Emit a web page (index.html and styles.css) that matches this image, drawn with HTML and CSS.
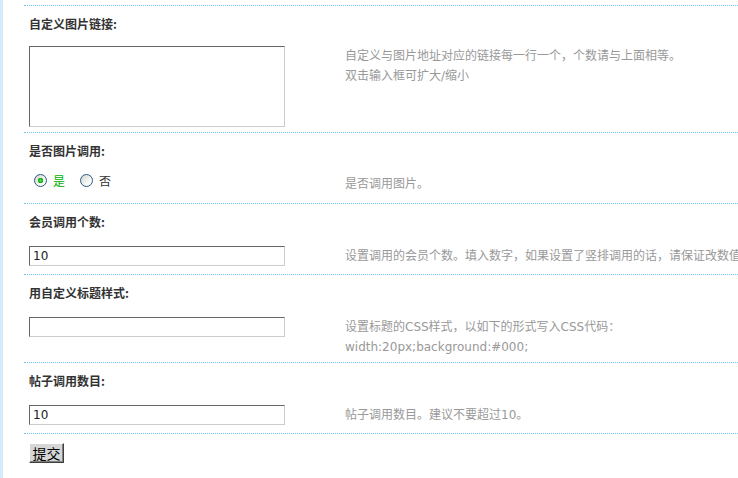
FILE: index.html
```html
<!DOCTYPE html>
<html lang="zh-CN">
<head>
<meta charset="utf-8">
<title>设置</title>
<link rel="stylesheet" href="styles.css">
</head>
<body>
<div class="page">
  <div class="block">
    <div class="title">自定义图片链接:</div>
    <div class="fields fields-area">
      <div class="field"><textarea class="textarea"></textarea></div>
      <div class="tip">自定义与图片地址对应的链接每一行一个，个数请与上面相等。<br>双击输入框可扩大/缩小</div>
    </div>
  </div>
  <div class="block">
    <div class="title">是否图片调用:</div>
    <div class="fields fields-radio">
      <div class="field radios">
        <input type="radio" class="radio" name="pic" checked><span class="label label-on">是</span>
        <input type="radio" class="radio" name="pic"><span class="label">否</span>
      </div>
      <div class="tip">是否调用图片。</div>
    </div>
  </div>
  <div class="block">
    <div class="title">会员调用个数:</div>
    <div class="fields">
      <div class="field"><input type="text" class="text" value="10"></div>
      <div class="tip">设置调用的会员个数。填入数字，如果设置了竖排调用的话，请保证改数值与竖排的列数相等。</div>
    </div>
  </div>
  <div class="block">
    <div class="title">用自定义标题样式:</div>
    <div class="fields">
      <div class="field"><input type="text" class="text" value=""></div>
      <div class="tip">设置标题的CSS样式，以如下的形式写入CSS代码：<br>width:20px;background:#000;</div>
    </div>
  </div>
  <div class="block">
    <div class="title">帖子调用数目:</div>
    <div class="fields">
      <div class="field"><input type="text" class="text" value="10"></div>
      <div class="tip">帖子调用数目。建议不要超过10。</div>
    </div>
  </div>
  <div class="block footer">
    <button type="button" class="btn">提交</button>
  </div>
</div>
</body>
</html>
```

FILE: styles.css
```css
html, body {
  margin: 0;
  padding: 0;
  background: #fff;
  overflow: hidden;
}
body {
  font-family: "DejaVu Sans", "Noto Sans CJK SC", sans-serif;
  font-size: 12px;
  color: #333;
}
.page {
  border-left: 3px solid #d3ecfa;
  padding: 5px 0 0 21px;
  min-height: 100vh;
  box-sizing: border-box;
  width: 1000px;
}
.block {
  border-top: 1px dotted #6cc4f0;
}
.title {
  padding: 8px 5px 6px;
  line-height: 20px;
  font-weight: bold;
  color: #333;
  font-family: "Noto Sans CJK SC", sans-serif;
}
.fields {
  display: grid;
  grid-template-columns: 316px 1fr;
  padding: 8px 0 5px;
}
.fields-area {
  padding-top: 6px;
}
.fields-radio {
  padding-top: 7px;
}
.field {
  padding-left: 5px;
}
.tip {
  padding-left: 5px;
  line-height: 20px;
  color: #999;
  white-space: nowrap;
}
.textarea {
  display: block;
  box-sizing: border-box;
  width: 256px;
  height: 81px;
  margin: 0;
  padding: 2px;
  border: 1px solid;
  border-color: #666 #ccc #ccc #666;
  resize: none;
  font: inherit;
}
.text {
  display: block;
  box-sizing: border-box;
  width: 256px;
  height: 20px;
  margin: 0 0 3px;
  padding: 0 3px;
  border: 1px solid;
  border-color: #666 #ccc #ccc #666;
  font-family: "DejaVu Sans", sans-serif;
  font-size: 12px;
  color: #222;
  outline: none;
}
.radios {
  display: flex;
  align-items: flex-start;
  height: 24px;
}
.radio {
  -webkit-appearance: none;
  appearance: none;
  box-sizing: border-box;
  width: 13px;
  height: 13px;
  margin: 0 6px 0 5px;
  border: 1px solid #2a5a86;
  border-radius: 50%;
  background: linear-gradient(135deg, #d4d4ce, #fafafa 70%);
}
.radio:checked {
  background: radial-gradient(circle, #6e6 0, #2b2 1.5px, #1a1 2.5px, transparent 3px), linear-gradient(135deg, #d4d4ce, #fafafa 70%);
}
.label {
  line-height: 13px;
  margin-right: 10px;
  font-family: "Noto Sans CJK SC", sans-serif;
  color: #333;
}
.label-on {
  color: #00b000;
}
.footer {
  padding: 9px 0 0 5px;
}
.btn {
  display: block;
  box-sizing: border-box;
  width: 35px;
  height: 20px;
  padding: 0;
  margin: 0;
  border: 1px solid;
  border-color: #fff #404040 #404040 #fff;
  box-shadow: inset -1px -1px 0 #808080;
  background: #d6d6d6;
  color: #000;
  font-family: "Noto Sans CJK SC", sans-serif;
  font-size: 14px;
  line-height: 17px;
}
```
